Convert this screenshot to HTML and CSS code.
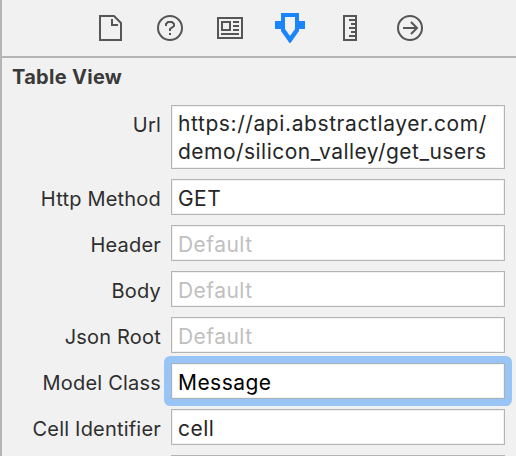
FILE: index.html
```html
<!DOCTYPE html>
<html lang="en">
<head>
<meta charset="utf-8">
<title>Table View Inspector</title>
<link rel="stylesheet" href="styles.css">
</head>
<body>
<main class="inspector">
  <nav class="tabs">
    <svg class="icon" viewBox="0 0 32 32"><path d="M6 4h14l7 7v17H6zM18 7v6h6"/></svg>
    <svg class="icon" viewBox="0 0 32 32"><circle cx="16" cy="16" r="12"/><path d="M12 14v-2l2-2h4l2 2v2l-4 3v2M16 21v2"/></svg>
    <svg class="icon" viewBox="0 0 32 32"><path d="M4 6h24v20H4zM8 10h8v8H8zM19 10h6M19 14h6M19 18h6M7 22h18"/></svg>
    <svg class="icon active" viewBox="0 0 32 32"><path fill-rule="evenodd" d="M7 1h18v8h6v8h-6v2l-8.500 12h-1L7 19v-2H1V9h6zM11 5v12l5 7 5-7V5z"/></svg>
    <svg class="icon" viewBox="0 0 32 32"><path d="M10 4h12v24H10zM15 8h6M17 12h4M15 16h6M17 20h4M15 24h6"/></svg>
    <svg class="icon" viewBox="0 0 32 32"><circle cx="16" cy="16" r="12"/><path d="M9 16h13M17 10l6 6-6 6"/></svg>
  </nav>
  <section class="panel">
    <h1 class="title">Table View</h1>
    <div class="form">
      <div class="row"><span class="label">Url</span><div class="field tall"><span class="line1">https://api.abstractlayer.com/</span><br><span class="line2">demo/silicon_valley/get_users</span></div></div>
      <div class="row"><span class="label">Http Method</span><div class="field">GET</div></div>
      <div class="row"><span class="label">Header</span><div class="field empty">Default</div></div>
      <div class="row"><span class="label">Body</span><div class="field empty">Default</div></div>
      <div class="row"><span class="label">Json Root</span><div class="field empty">Default</div></div>
      <div class="row"><span class="label">Model Class</span><div class="field focused">Message</div></div>
      <div class="row"><span class="label">Cell Identifier</span><div class="field">cell</div></div>
      <div class="row"><span class="label"></span><div class="field"></div></div>
    </div>
  </section>
</main>
</body>
</html>
```
FILE: styles.css
```css
* { box-sizing: border-box; }
body { margin: 0; background: #f1f1f1; font-family: Inter, "Liberation Sans", sans-serif; }
.inspector { height: 456px; overflow: hidden; border-left: 2px solid #b4b4b4; }
.tabs { height: 58px; padding: 12px 0 0 92px; display: flex; gap: 28px; border-bottom: 2px solid #b4b4b4; }
.icon { width: 32px; height: 32px; fill: none; stroke: #565656; stroke-width: 2; }
.active { fill: #1a84ff; stroke: none; }
.title { margin: 0; padding: 6px 0 0 10px; height: 47px; font-size: 20px; line-height: 26px; font-weight: 700; letter-spacing: 0.3px; color: #3a3a3a; }
.form { display: flex; flex-direction: column; gap: 10px; }
.row { display: grid; grid-template-columns: 159px 334px; column-gap: 10px; }
.label { text-align: right; font-size: 20px; line-height: 26px; padding-top: 7px; letter-spacing: 0.2px; color: #2e2e2e; white-space: nowrap; }
.field { height: 36px; padding: 5px 6px 0; font-size: 21px; line-height: 28px; letter-spacing: 0.45px; background: #fff; border: 1px solid #b4b4b4; box-shadow: inset 0 0 0 1px #f2f2f2; color: #262626; white-space: nowrap; }
.tall { height: 64px; padding-top: 4px; }
.line1 { letter-spacing: 0.59px; }
.line2 { letter-spacing: 0.47px; }
.empty { color: #bfbfbf; }
.focused { position: relative; color: #000; border-color: #a9b1ba; }
.focused::after { content: ""; position: absolute; inset: -8px; border: 7px solid #98c5f6; border-radius: 6px; }
```
